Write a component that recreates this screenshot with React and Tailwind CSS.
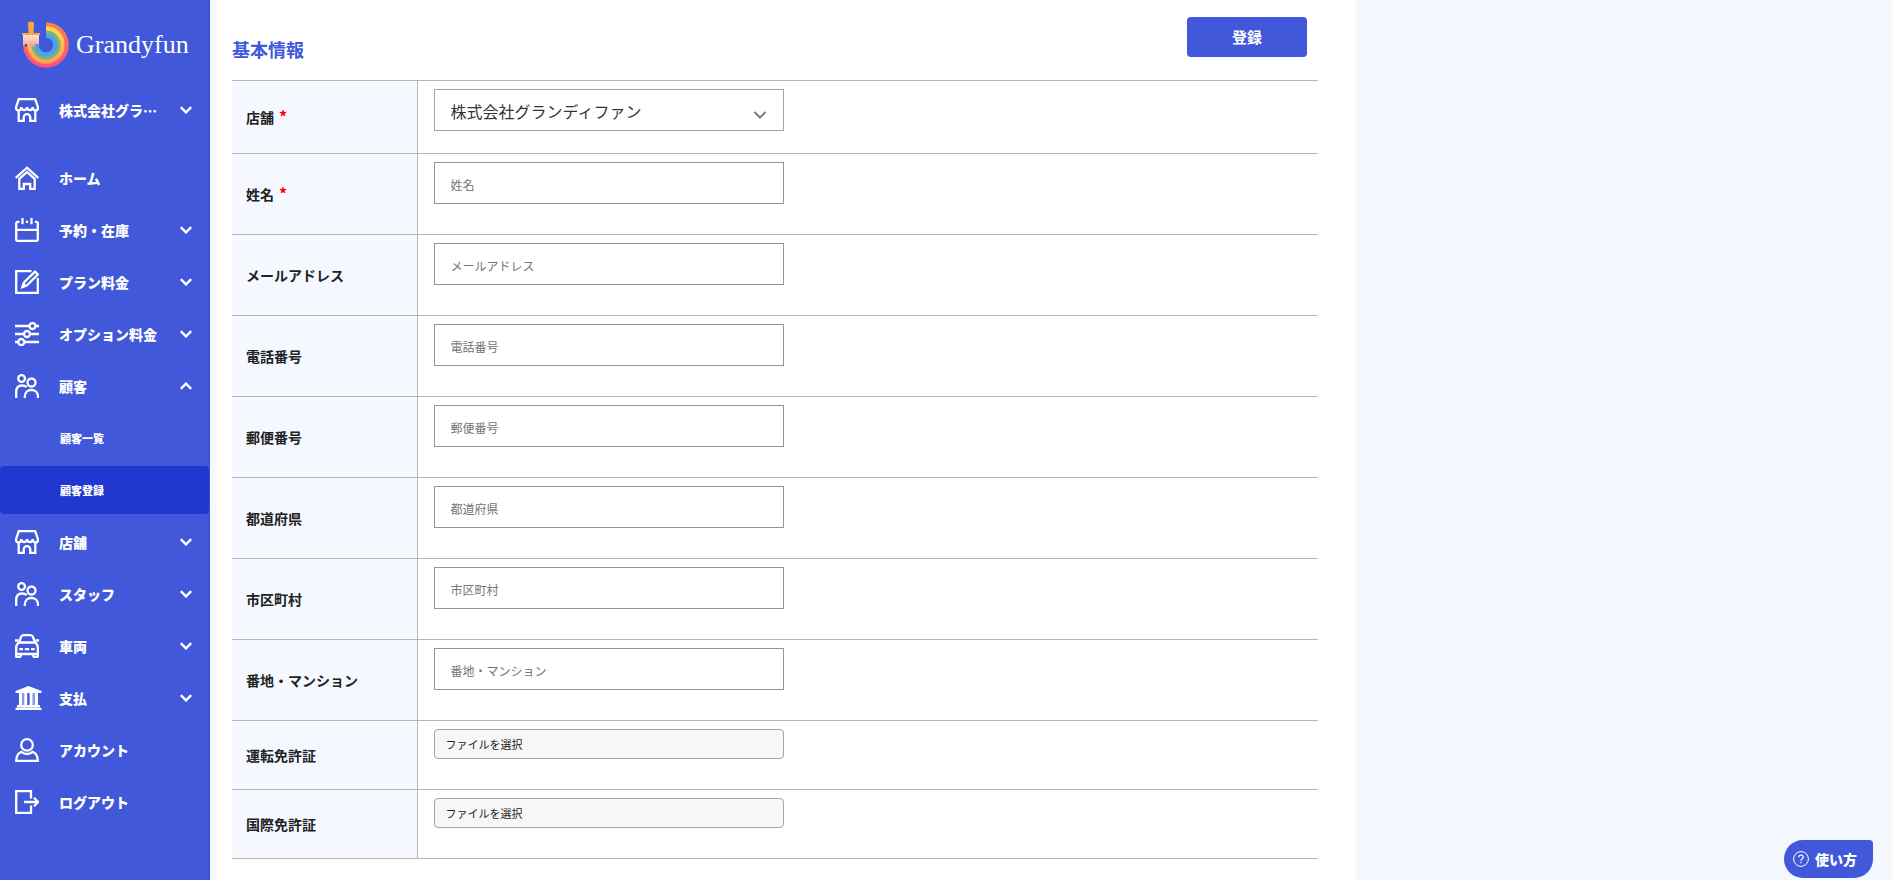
import { ChevronDown } from "lucide-react";

const Icon = ({ children }) => (
  <svg
    viewBox="0 0 24 24"
    className="w-6 h-6 shrink-0"
    fill="none"
    stroke="currentColor"
    strokeWidth="2.3"
    aria-hidden="true"
  >
    {children}
  </svg>
);

const StoreIcon = () => (
  <Icon>
    <path d="M3.800 1.200H20.200L23 9.500Q23 12.500 20.500 12.500Q18 12.500 17.700 9.200Q17.300 12.200 15 12.200Q12.400 12.200 12 9.200Q11.600 12.200 9 12.200Q6.700 12.200 6.300 9.200Q6 12.500 3.500 12.500Q1 12.500 1 9.500Z" />
    <path d="M3.700 12.500V22.900H8.700V19.500A3.300 3.300 0 0 1 15.300 19.500V22.900H20.300V12.500" />
  </Icon>
);

const HomeIcon = () => (
  <Icon>
    <path d="M.7 12L12 1.700L23.300 12" />
    <path d="M4.300 12.800L12 6L19.700 12.800V22.900H15.200V18H8.800V22.900H4.300Z" />
  </Icon>
);

const CalendarIcon = () => (
  <Icon>
    <path d="M4.500 3.800H2.700Q1.200 3.800 1.200 5.500V21.300Q1.200 22.800 2.700 22.800H21.300Q22.800 22.800 22.800 21.300V5.500Q22.800 3.800 21.300 3.800H19.800" />
    <path d="M1 11.800H23M7.500 0V6.200M16.500 0V6.200M10.900 3.800H13.100" />
  </Icon>
);

const EditIcon = () => (
  <Icon>
    <path d="M16.500 1.200H1.200V22.800H22.800V8" />
    <path d="M7.500 17L9.200 12.200L20 1.700L22.800 4.500L12 15.200Z" />
    <path d="M6 18.500L8 12.200L12.200 16Z" fill="currentColor" stroke="none" />
  </Icon>
);

const OptionsIcon = () => (
  <Icon>
    <path d="M0 4H14.500M20.500 4H24M0 12H8.500M15.500 12H24M0 20H3M9.500 20H24" />
    <circle cx="17.500" cy="4" r="3" />
    <circle cx="12" cy="12" r="3" />
    <circle cx="6.300" cy="20" r="3" />
  </Icon>
);

const PeopleIcon = () => (
  <Icon>
    <circle cx="6.600" cy="4.500" r="3.400" />
    <circle cx="16.500" cy="8.500" r="4" />
    <path d="M1.200 24V18C1.200 13.500 3.500 11.500 7 11.500Q10 11.500 11.800 13.200" />
    <path d="M9.800 24V22.500C9.800 18.500 12.500 16 16.400 16S23 18.500 23 22.500V24" />
  </Icon>
);

const CarIcon = () => (
  <Icon>
    <path d="M4 8.500L6 3Q6.700 1.200 8.500 1.200H15.500Q17.300 1.200 18 3L20 8.500" />
    <path d="M0 6.500H3.500M20.500 6.500H24M4 8.500H20Q22.800 10.500 22.800 13.500V20H1.200V13.500Q1.200 10.500 4 8.500Z" />
    <path d="M1.200 19V22.500Q1.200 23 2 23H4.500Q6 23 6 20M18 20Q18 23 19.500 23H22Q22.800 23 22.800 22.500V19" />
    <path d="M4.300 15.200H8M9.800 15.200H14.200M16 15.200H19.700" />
  </Icon>
);

const BankIcon = () => (
  <svg viewBox="0 0 27 24" className="w-[27px] h-6 shrink-0" fill="currentColor" aria-hidden="true">
    <path d="M13.500 0L26.500 5V7H.5V5Z" />
    <path d="M4 7H7V19H4ZM9.200 7H12.200V19H9.200ZM14.600 7H17.600V19H14.600ZM20 7H23V19H20Z" />
    <path d="M7 7H9.200V19H7ZM17.600 7H20V19H17.600Z" opacity=".4" />
    <path d="M2 19H25V21H2ZM.5 22H26.500V24H.5Z" />
    <path d="M1.500 21H25.500V22H1.500Z" opacity=".7" />
  </svg>
);

const AccountIcon = () => (
  <Icon>
    <circle cx="12" cy="6.900" r="5.800" />
    <path d="M6.500 13.800C3 15 1.200 18 1.200 22.900H22.800C22.800 18 21 15 17.500 13.800Q15 16 12 16T6.500 13.800Z" />
  </Icon>
);

const LogoutIcon = () => (
  <Icon>
    <path d="M16 8.500V1.200H1.200V22.800H16V15.500" />
    <path d="M9 12H23M19 7.800L23.200 12L19 16.200" />
  </Icon>
);

const Chevron = ({ up }) => (
  <svg
    viewBox="0 0 12 8"
    className="w-3 h-2 shrink-0"
    fill="none"
    stroke="currentColor"
    strokeWidth="2.4"
    aria-hidden="true"
  >
    <path d={up ? "M.8 6.800L6 1.600L11.200 6.800" : "M.8 1.200L6 6.400L11.200 1.200"} />
  </svg>
);

const Logo = () => (
  <svg viewBox="0 0 48 48" className="w-12 h-12 shrink-0" fill="none" aria-hidden="true">
    <defs>
      <linearGradient id="outer" x1="0" y1="0" x2="0" y2="1">
        <stop offset="0" stopColor="#ff7d50" />
        <stop offset="1" stopColor="#ff4f7b" />
      </linearGradient>
      <linearGradient id="middle" x1="0" y1="0" x2="0" y2="1">
        <stop offset="0" stopColor="#ffd84f" />
        <stop offset="1" stopColor="#fba553" />
      </linearGradient>
      <linearGradient id="bristle" x1="0" y1="0" x2="0" y2="1">
        <stop offset="0" stopColor="#ffe3d6" />
        <stop offset="1" stopColor="#f9978b" />
      </linearGradient>
    </defs>
    <path d="M25 4.500A20.500 20.500 0 1 1 4.500 25" stroke="url(#outer)" strokeWidth="4.500" />
    <path d="M25 8.500A16.500 16.500 0 1 1 8.500 25" stroke="url(#middle)" strokeWidth="4.500" />
    <path d="M25 12.500A12.500 12.500 0 1 1 12.500 25" stroke="#86b56a" strokeWidth="4" />
    <path d="M25 15.500A9.500 9.500 0 1 1 15.500 25" stroke="#4ba3ee" strokeWidth="4.500" />
    <path d="M2 15H18V25L15 24L13 27L10 25L7 28L5 25L2 26Z" fill="url(#bristle)" />
    <path d="M3 25L6 27V24" fill="#513a4d" />
    <path d="M7 3Q7 1.500 10 1.500T13 3L12.500 13H19V15H1V13H7.500Z" fill="#f9a83c" />
  </svg>
);

const menu = [
  { label: "ホーム", icon: HomeIcon },
  { label: "予約・在庫", icon: CalendarIcon, expandable: true },
  { label: "プラン料金", icon: EditIcon, expandable: true },
  { label: "オプション料金", icon: OptionsIcon, expandable: true },
  {
    label: "顧客",
    icon: PeopleIcon,
    expandable: true,
    children: [{ label: "顧客一覧" }, { label: "顧客登録", active: true }],
  },
  { label: "店舗", icon: StoreIcon, expandable: true },
  { label: "スタッフ", icon: PeopleIcon, expandable: true },
  { label: "車両", icon: CarIcon, expandable: true },
  { label: "支払", icon: BankIcon, expandable: true },
  { label: "アカウント", icon: AccountIcon },
  { label: "ログアウト", icon: LogoutIcon },
];

const fields = [
  { id: "name", label: "姓名", required: true },
  { id: "email", label: "メールアドレス" },
  { id: "tel", label: "電話番号" },
  { id: "zip", label: "郵便番号" },
  { id: "pref", label: "都道府県" },
  { id: "city", label: "市区町村" },
  { id: "address", label: "番地・マンション" },
];

const files = [
  { id: "license", label: "運転免許証" },
  { id: "intlLicense", label: "国際免許証" },
];

const rowClass =
  "flex items-center w-full h-12 pl-[15px] pr-[17px] text-left text-sm font-black text-white";

const MenuItem = ({ item }) => {
  const ItemIcon = item.icon;
  const content = (
    <>
      <span className="w-11 shrink-0">
        <ItemIcon />
      </span>
      <span className="flex-1 whitespace-nowrap">{item.label}</span>
      {item.expandable && <Chevron up={Boolean(item.children)} />}
    </>
  );

  return (
    <li>
      {item.expandable ? (
        <button type="button" className={rowClass}>
          {content}
        </button>
      ) : (
        <a href="#" className={rowClass}>
          {content}
        </a>
      )}
      {item.children && (
        <ul className="flex flex-col gap-1 mt-1">
          {item.children.map((child) => (
            <li key={child.label}>
              <a
                href="#"
                className={`flex items-center h-12 pl-[60px] rounded text-[11px] font-black text-white ${
                  child.active ? "bg-[#2038cd]" : ""
                }`}
              >
                {child.label}
              </a>
            </li>
          ))}
        </ul>
      )}
    </li>
  );
};

const Sidebar = () => (
  <aside className="w-[210px] shrink-0 bg-[#4058d9] border-r border-[#3a50cc]">
    <a href="#" className="flex items-center gap-[7px] h-[88px] pl-[21px] text-white">
      <Logo />
      <span className="font-['Liberation_Serif',serif] text-[26px]">Grandyfun</span>
    </a>
    <nav>
      <ul className="-mt-0.5 mb-5">
        <MenuItem item={{ label: "株式会社グラ…", icon: StoreIcon, expandable: true }} />
      </ul>
      <ul className="flex flex-col gap-1">
        {menu.map((item) => (
          <MenuItem key={item.label} item={item} />
        ))}
      </ul>
    </nav>
  </aside>
);

const Row = ({ id, label, required, className, children }) => (
  <tr className="border-y border-[#b5b5b5]">
    <th
      scope="row"
      className="w-[185px] pl-[14px] text-left align-middle text-sm font-bold bg-[#f5f8ff] border-r border-[#b5b5b5]"
    >
      <label htmlFor={id}>
        {label}
        {required && <span className="ml-[5px] text-base leading-none text-[#ff0000]">*</span>}
      </label>
    </th>
    <td className={`pt-2 pl-4 align-top ${className}`}>{children}</td>
  </tr>
);

const App = () => {
  return (
    <div className="flex min-h-screen bg-[#f5f8ff] text-[#222222] font-['Noto_Sans_CJK_JP',sans-serif]">
      <Sidebar />
      <main className="flex-1 max-w-[1140px] ml-1.5 pl-4 pr-[38px] pb-5 bg-white">
        <div className="flex justify-between h-20 pt-[17px] pr-[11px]">
          <h1 className="pt-5 text-lg leading-6 font-bold text-[#4058d9]">基本情報</h1>
          <button
            type="submit"
            form="customer"
            className="w-[120px] h-10 rounded bg-[#4058d9] text-[15px] font-bold text-white"
          >
            登録
          </button>
        </div>
        <form id="customer">
          <table className="w-full border-collapse">
            <tbody>
              <Row id="shop" label="店舗" required className="h-[73px]">
                <div className="relative w-[350px]">
                  <select
                    id="shop"
                    className="appearance-none block w-full h-[42px] px-4 pt-0.5 bg-white border border-[#a5a5a5] text-base text-[#333333]"
                  >
                    <option>株式会社グランディファン</option>
                  </select>
                  <ChevronDown
                    size={20}
                    strokeWidth={2.3}
                    className="absolute right-3.5 top-4 text-[#6f7b7b] pointer-events-none"
                  />
                </div>
              </Row>
              {fields.map((field) => (
                <Row key={field.id} {...field} className="h-[81px]">
                  <input
                    id={field.id}
                    type="text"
                    placeholder={field.label}
                    className="block w-[350px] h-[42px] px-4 pt-0.5 bg-white border border-[#959595] text-xs placeholder:text-[#757575]"
                  />
                </Row>
              ))}
              {files.map((file) => (
                <Row key={file.id} {...file} className="h-[69px]">
                  <label
                    htmlFor={file.id}
                    className="flex items-center w-[350px] h-[30px] pl-[11px] rounded border border-[#a5a5a5] bg-[#f7f7f7] text-[11px] cursor-pointer"
                  >
                    ファイルを選択
                  </label>
                  <input id={file.id} type="file" className="sr-only" />
                </Row>
              ))}
            </tbody>
          </table>
        </form>
      </main>
      <button
        type="button"
        className="fixed right-[19px] bottom-0.5 flex items-center gap-1.5 h-[38px] pl-[9px] pr-4 rounded-[19px] rounded-tr bg-[#4058d9] text-sm font-black text-white"
      >
        <svg viewBox="0 0 16 16" className="w-4 h-4" fill="none" stroke="currentColor" aria-hidden="true">
          <circle cx="8" cy="8" r="7.400" />
          <path d="M5.800 6.300Q5.800 4.200 8 4.200T10.200 6.200Q10.200 7.300 8.900 8Q8 8.500 8 9.700M8 11V12.300" strokeWidth="1.300" />
        </svg>
        使い方
      </button>
    </div>
  );
};

export default App;
